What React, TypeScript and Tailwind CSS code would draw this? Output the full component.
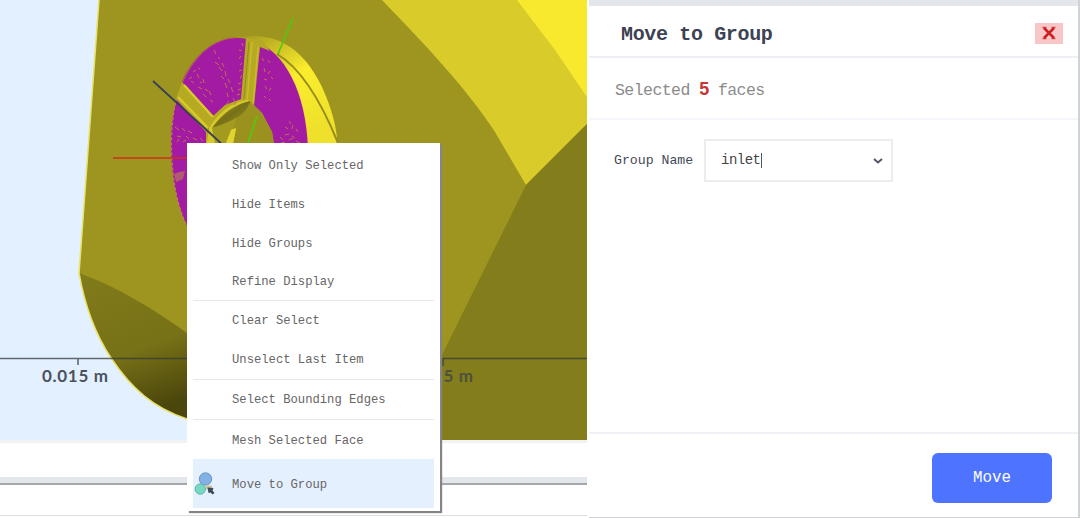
import React from 'react';

interface MenuRow {
  label: string;
  height: string;
  divider?: boolean;
}

const MENU_ROWS: MenuRow[] = [
  { label: 'Show Only Selected', height: 'h-[39px]' },
  { label: 'Hide Items', height: 'h-[39px]' },
  { label: 'Hide Groups', height: 'h-[38px]' },
  { label: 'Refine Display', height: 'h-[39px]', divider: true },
  { label: 'Clear Select', height: 'h-[39px]' },
  { label: 'Unselect Last Item', height: 'h-[40px]', divider: true },
  { label: 'Select Bounding Edges', height: 'h-[40px]', divider: true },
  { label: 'Mesh Selected Face', height: 'h-[40px]' },
];

// mesh noise on the selected faces
const SPECKLES =
  'M189 79l3-2m1-5l3-2m2-2l2 1m-9 12l3 2m3-9l2 4m1 4l2 1m-4 4l4 2m1-10l1 4m1 6l3 2m-5 3l3 3m3-6l2 4m-1 5l3 2M214 50l2 4m2 3l2 2m-5 3l4 3m3-2l2 4m-5 0l3 4m3 0l1 5m-5 0l3 3m4 0l2 4m-5 0l2 5m4-1l2 5m-6 1l1 4m5 1l2 4m-6-1l-3 4m8 0l2-3M242 43l1 3m-4 4l3 1m-1 5l-2 3m3 4l-2 2m2 5l-3 1m3 4l-2 4m1 4l-3 1m3 5l-3 1m2 4l-3 1M262 58l2 3m4-1l2 3m-6 5l1 4m5-1l-2 3m-4 5l3 1m4-3l2 2m-8 7l2 3m4-1l-2 3m-5 5l2 2m3 1l2 2M289 121l2 3m-6 3l3 2m4 0l1-4m3 4l2 3m-13 3l4-1m3 2l3 2m-15-1l3 3m6 0l4-2m3 3l4 2m-19 0l4-1m5 2l3-1M175 127l4 3m3-2l3 3m3 0l4 2m-15 3l4 1m5-1l3 3m4-1l4 2m3-2l3 3m-17-1l-3 2m-6 0l2-3';

const Viewport: React.FC = () => (
  <svg viewBox="0 0 587 440" className="block h-[440px] w-[587px]">
    <defs>
      <linearGradient id="base" x1="0" y1="0" x2="0.3" y2="1">
        <stop offset="0" stopColor="#827b1a" />
        <stop offset="0.6" stopColor="#777117" />
        <stop offset="1" stopColor="#4b460b" />
      </linearGradient>
      <linearGradient id="rim" x1="0" y1="0" x2="0.5" y2="1">
        <stop offset="0" stopColor="#a49a1e" />
        <stop offset="0.22" stopColor="#cabd25" />
        <stop offset="0.5" stopColor="#fbed2d" />
        <stop offset="1" stopColor="#eee02b" />
      </linearGradient>
      <linearGradient id="hub" x1="0" y1="0" x2="1" y2="1">
        <stop offset="0" stopColor="#a79c20" />
        <stop offset="0.5" stopColor="#777018" />
        <stop offset="1" stopColor="#a29a20" />
      </linearGradient>
    </defs>

    <rect width="587" height="440" fill="#e3f0ff" />
    <path d="M99 0L80 260L79 273C85 307 97 337 111 358C131 388 153 408 187 419L240 440H587V0Z" fill="#9d951f" />
    <path d="M79 273C118 287 154 309 200 342V424L187 419C153 408 131 388 111 358C96 335 85 307 79 273Z" fill="url(#base)" />
    <path d="M99 0L80 260L79 273C85 307 97 337 111 358C131 388 153 408 187 419" fill="none" stroke="#e9e36b" strokeWidth="1.5" />
    <path d="M382 0C431 51 466 88 495 132L526 185L587 124V0Z" fill="#d8cb2a" />
    <path d="M517 0L545 37C558 53 573 77 587 97V0Z" fill="#f8e92e" />
    <path d="M526 185L587 124V440H420V358L441 357Z" fill="#837d1b" />

    <path d="M240 37C282 31 306 54 322 87C331 107 337 125 338 150H290L246 43Z" fill="url(#rim)" />
    <path d="M277 54C304 70 323 106 338 143" fill="none" stroke="#958c1d" strokeWidth="2" />
    <path d="M235 38C275 36 306 80 308 150V226H187C176 203 171 175 171 143C171 85 199 40 235 38Z" fill="#a31ba2" />
    <path d="M246 38L241 99L225 105L213 116L182 82L176 99L206 132V150H275L272 132L262 113L254 106L260 47L270 51L262 40Z" fill="#b6aa23" />
    <path d="M184 85L213 117M178 97L208 128" fill="none" stroke="#d8cb2a" strokeWidth="2.4" />
    <path d="M252 42L247 101M258 47L253 105" fill="none" stroke="#c9bc28" strokeWidth="1.5" />
    <path d="M249 42L244 99" fill="none" stroke="#8a811d" strokeWidth="0.8" />
    <path d="M208 129C221 109 234 100 250 101L262 113L272 132L275 150H207Z" fill="#9a911e" />
    <path d="M206 149L209 128C221 108 237 100 250 100L239 110L213 127L236 129L232 149Z" fill="#d5c82b" />
    <path d="M212 128C224 111 237 104 250 101C247 114 235 121 212 128Z" fill="url(#hub)" />
    <path d="M212 128C224 124 232 121 237 117L233 129L226 143H215Z" fill="#a39a20" />
    <path d="M231 130L236 128L233 143H226Z" fill="#e2d42c" />
    <path d={SPECKLES} fill="none" stroke="#b7744f" strokeWidth="1" />
    <path d="M174 174l5-2 6-1-2 8-7 3z" fill="#b05b70" />
    <path d="M182 82C193 56 213 39 235 38" fill="none" stroke="#b54671" strokeWidth="1" />
    <path d="M177 98C169 123 168 188 187 226" fill="none" stroke="#c9825a" strokeWidth="1" strokeDasharray="3 2" />

    <path d="M293 18L278 54M257 116L247 146" stroke="#55c710" strokeWidth="1.7" />
    <path d="M113 158H190" stroke="#cc3217" strokeWidth="1.6" />
    <path d="M153 81L224 146" stroke="#343f57" strokeWidth="1.7" />

    <path d="M0 358.5H587M78 358V365M443 358V366" stroke="#313b3c" strokeOpacity="0.75" strokeWidth="1.6" />
    <g className="font-['Lato',sans-serif] text-[17px] font-bold" fill="#4a5260">
      <text x="42" y="382" textLength="66">0.015 m</text>
      <text x="407" y="382" textLength="66" fill="#4b5140">0.015 m</text>
    </g>
  </svg>
);

const GroupIcon: React.FC = () => (
  <svg viewBox="0 0 22 24" className="h-6 w-[22px] shrink-0">
    <circle cx="12.5" cy="7" r="6.2" fill="#83b1e3" stroke="#6d96c5" />
    <circle cx="7.3" cy="17" r="5.2" fill="#78d8c2" stroke="#5ab9aa" />
    <path d="M12.5 13.5H19V16L16 18L13 17Z" fill="#d1c5a0" />
    <path d="M14.5 15.5L20.5 16L19.5 18.5L21.5 21L19.5 22.5L17.5 20.5L15.5 21Z" fill="#414954" />
  </svg>
);

const ContextMenu: React.FC = () => (
  <div className="absolute left-[187px] top-[143px] h-[368px] w-[253px] bg-white px-1.5 pt-[3px] text-[12.2px] text-[#666] shadow-[2px_2px_1px_#858585]">
    {MENU_ROWS.map((row) => (
      <div
        key={row.label}
        className={`flex items-center pl-[39px] pt-0.5 ${row.height} ${row.divider ? 'border-b border-[#e5e9ed]' : ''}`}
      >
        {row.label}
      </div>
    ))}
    <div className="-mt-px flex h-[49px] items-center bg-[#e5f0fe]">
      <GroupIcon />
      <span className="ml-[17px] pt-1">Move to Group</span>
    </div>
  </div>
);

const MoveDialog: React.FC = () => (
  <section className="flex h-[518px] w-[491px] flex-col border-b border-r-2 border-[#d0d2d5] bg-white">
    <div className="h-1.5 shrink-0 bg-[#e3e6eb]" />
    <header className="flex h-[52px] shrink-0 items-center justify-between border-b-2 border-[#edeff4] pl-8 pr-[15px] pt-1">
      <h1 className="pt-[3px] text-[20px] font-bold tracking-[-0.35px] text-[#3d4254]">Move to Group</h1>
      <button className="flex h-[21px] w-7 items-center justify-center bg-[#f8c6c6]" aria-label="Close">
        <svg viewBox="0 0 14 14" className="size-3.5">
          <path d="M0.5 1.5H4.5M9.5 1.5H13.5M0.5 12.5H4.5M9.5 12.5H13.5" stroke="#cf4a4a" strokeWidth="1.6" />
          <path d="M12 2L2 12M2 2L12 12" stroke="#c91f20" strokeWidth="2.5" />
        </svg>
      </button>
    </header>
    <div className="flex h-[62px] shrink-0 items-center border-b-2 border-[#f5f6f9] pl-[26px] pt-1 text-[16.5px] tracking-[-0.55px] text-[#8b8b8b]">
      <p className="whitespace-pre">
        Selected <b className="font-['Liberation_Sans',sans-serif] text-[18px] tracking-[-0.65px] text-[#c83534]">5</b> faces
      </p>
    </div>
    <div className="flex flex-1 items-start pl-[25px] pt-[19px]">
      <label className="flex h-[42px] w-[90px] items-center pt-0.5 text-[13.2px] text-[#444957]">Group Name</label>
      <div className="flex h-[43px] w-[189px] items-center justify-between border-2 border-[#ededee] pl-[15px] pr-[8px] text-[14px] text-[#444]">
        <span className="flex items-center tracking-[-0.5px]">
          inlet
          <i className="h-[15px] w-px bg-[#555]" />
        </span>
        <svg viewBox="0 0 10 8" className="h-2 w-2.5">
          <path d="M1 2L5 5.5L9 2" fill="none" stroke="#515660" strokeWidth="2" />
        </svg>
      </div>
    </div>
    <footer className="flex h-[85px] shrink-0 items-center justify-end border-t-2 border-[#f0f1f4] pr-[26px] pt-1">
      <button className="h-[50px] w-[120px] rounded-md bg-[#4e74ff] pt-[3px] text-[15.8px] text-white">Move</button>
    </footer>
  </section>
);

export default function App() {
  return (
    <main className="flex h-[518px] w-[1080px] overflow-hidden bg-white font-['Liberation_Mono',monospace]">
      <div className="relative mr-0.5 h-[518px] w-[587px] shrink-0 overflow-hidden">
        <Viewport />
        <div className="h-[3px] bg-[#f2f2f2]" />
        <div className="h-[34px]" />
        <div className="h-[8px] border-b-2 border-[#a5a7aa] bg-[#e3e6ea]" />
        <div className="h-[31px] border-b border-[#dddddd]" />
        <ContextMenu />
      </div>
      <MoveDialog />
    </main>
  );
}
